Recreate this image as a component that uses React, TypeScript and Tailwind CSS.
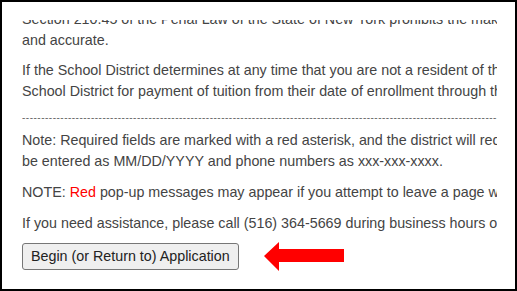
export default function App() {
  const dashes = '-'.repeat(200)

  return (
    <div className="w-[517px] h-[291px] bg-white border-2 border-black overflow-hidden font-['Liberation_Sans',Arial,sans-serif]">
      <div className="pt-[18px] pl-5">
        <div className="w-[475px] h-[266px] overflow-hidden text-[14.3px] leading-[21px] text-[#444]">
          {/* Top paragraph, scrolled partly out of view */}
          <p className="whitespace-nowrap -mt-[11px]">
            Section 210.45 of the Penal Law of the State of New York prohibits the making of false statements. All information must be true
            <br />
            and accurate.
          </p>

          <p className="whitespace-nowrap mt-[9px]">
            If the School District determines at any time that you are not a resident of the School District, you will be liable to the
            <br />
            School District for payment of tuition from their date of enrollment through the date of withdrawal.
          </p>

          <p className="whitespace-nowrap mt-[8px] text-[10px] leading-[16px] text-[#666] tracking-[0.5px]">
            {dashes}
          </p>

          <p className="whitespace-nowrap mt-[4px]">
            Note: Required fields are marked with a red asterisk, and the district will require all fields to be completed. Dates should
            <br />
            be entered as MM/DD/YYYY and phone numbers as xxx-xxx-xxxx.
          </p>

          <p className="whitespace-nowrap mt-[10px]">
            NOTE: <span className="text-[#ff0000]">Red</span> pop-up messages may appear if you attempt to leave a page without saving.
          </p>

          <p className="whitespace-nowrap mt-[10px]">
            If you need assistance, please call (516) 364-5669 during business hours or email the registration office.
          </p>

          <div className="flex items-center gap-[25px] mt-[7px]">
            <button className="h-[27px] px-[8px] bg-[#efefef] border border-[#767676] rounded-[3px] text-[14.3px] text-[#222] leading-none">
              Begin (or Return to) Application
            </button>
            <svg width="81" height="31" viewBox="0 0 81 31" className="shrink-0">
              <polygon points="0,15 15,1 15,8 80,8 80,21 15,21 15,30" fill="#ff0000" />
            </svg>
          </div>
        </div>
      </div>
    </div>
  )
}
